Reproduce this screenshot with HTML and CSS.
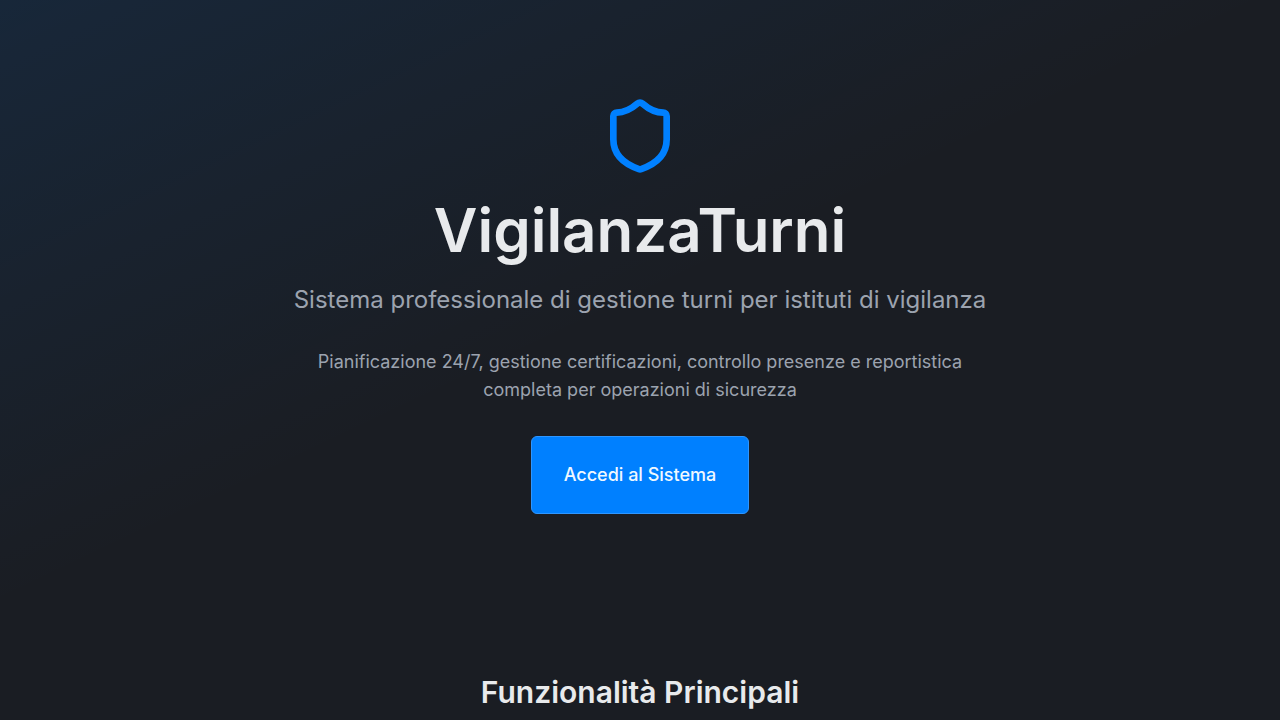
FILE: index.html
```
<!DOCTYPE html>
<html lang="it">
<head>
    <meta charset="UTF-8">
    <meta name="viewport" content="width=device-width, initial-scale=1.0">
    <title>VigilanzaTurni</title>
    <link rel="stylesheet" href="styles.css">
</head>
<body>
    <!-- Hero -->
    <header class="hero">
        <div class="hero-content">
            <svg class="hero-icon" viewBox="0 0 24 24" aria-hidden="true">
                <path d="M20 13c0 5-3.5 7.5-7.66 8.95a1 1 0 0 1-.67-.01C7.5 20.5 4 18 4 13V6a1 1 0 0 1 1-1c2 0 4.5-1.2 6.24-2.72a1.17 1.17 0 0 1 1.52 0C14.51 3.81 17 5 19 5a1 1 0 0 1 1 1z"/>
            </svg>
            <h1>VigilanzaTurni</h1>
            <p class="subtitle">Sistema professionale di gestione turni per istituti di vigilanza</p>
            <p class="description">Pianificazione 24/7, gestione certificazioni, controllo presenze e reportistica completa per operazioni di sicurezza</p>
            <button type="button" class="login-btn">Accedi al Sistema</button>
        </div>
    </header>

    <!-- Funzionalità -->
    <main class="features">
        <h2>Funzionalità Principali</h2>
    </main>
</body>
</html>
```

FILE: styles.css
```
:root {
    --bg: #1a1d23;
    --text-primary: #e8eaec;
    --text-secondary: #9ca3af;
    --accent: #0080ff;
    --accent-border: #2e96ff;
}

* {
    box-sizing: border-box;
}

body {
    font-family: 'Inter', sans-serif;
    margin: 0;
    min-height: 100vh;
    background-color: var(--bg);
    color: var(--text-primary);
}

h1,
h2,
p {
    margin: 0;
}

/* Hero */
.hero {
    padding: 96px 24px;
    background: linear-gradient(to bottom right, rgba(0, 128, 255, 0.1), transparent 50%);
}

.hero-content {
    display: flex;
    flex-direction: column;
    align-items: center;
    max-width: 896px;
    margin: 0 auto;
    text-align: center;
}

.hero-icon {
    width: 80px;
    height: 80px;
    margin-bottom: 24px;
    fill: none;
    stroke: var(--accent);
    stroke-width: 2;
    stroke-linecap: round;
    stroke-linejoin: round;
}

.hero h1 {
    margin-bottom: 24px;
    font-size: 60px;
    font-weight: 600;
    line-height: 60px;
}

.subtitle {
    margin-bottom: 32px;
    color: var(--text-secondary);
    font-size: 24px;
    line-height: 32px;
}

.description {
    max-width: 672px;
    margin-bottom: 32px;
    color: var(--text-secondary);
    font-size: 18px;
    line-height: 28px;
}

.login-btn {
    padding: 24px 32px;
    border: 1px solid var(--accent-border);
    border-radius: 6px;
    background-color: var(--accent);
    color: #f0f8ff;
    font-family: inherit;
    font-size: 18px;
    font-weight: 500;
    line-height: 28px;
    cursor: pointer;
}

/* Funzionalità */
.features {
    padding: 64px 24px;
    text-align: center;
}

.features h2 {
    font-size: 30px;
    font-weight: 600;
    line-height: 36px;
}
```
